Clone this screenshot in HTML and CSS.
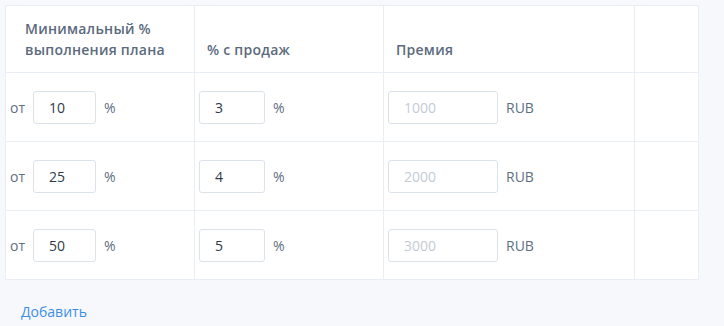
FILE: index.html
```html
<!DOCTYPE html>
<html lang="ru">
<head>
    <meta charset="UTF-8">
    <title>Премии</title>
    <link rel="stylesheet" href="styles.css">
</head>
<body>
    <div class="page">
        <table class="bonus-table">
            <colgroup>
                <col class="col-plan">
                <col class="col-sales">
                <col class="col-bonus">
                <col class="col-empty">
            </colgroup>
            <thead>
                <tr>
                    <th class="th-plan">Минимальный %<br>выполнения плана</th>
                    <th>% с продаж</th>
                    <th>Премия</th>
                    <th></th>
                </tr>
            </thead>
            <tbody>
                <tr>
                    <td><div class="field"><span class="unit">от</span><input class="inp inp-plan" type="text" value="10"><span class="unit">%</span></div></td>
                    <td><div class="field"><input class="inp inp-sales" type="text" value="3"><span class="unit">%</span></div></td>
                    <td><div class="field"><input class="inp inp-bonus" type="text" placeholder="1000"><span class="unit">RUB</span></div></td>
                    <td></td>
                </tr>
                <tr>
                    <td><div class="field"><span class="unit">от</span><input class="inp inp-plan" type="text" value="25"><span class="unit">%</span></div></td>
                    <td><div class="field"><input class="inp inp-sales" type="text" value="4"><span class="unit">%</span></div></td>
                    <td><div class="field"><input class="inp inp-bonus" type="text" placeholder="2000"><span class="unit">RUB</span></div></td>
                    <td></td>
                </tr>
                <tr>
                    <td><div class="field"><span class="unit">от</span><input class="inp inp-plan" type="text" value="50"><span class="unit">%</span></div></td>
                    <td><div class="field"><input class="inp inp-sales" type="text" value="5"><span class="unit">%</span></div></td>
                    <td><div class="field"><input class="inp inp-bonus" type="text" placeholder="3000"><span class="unit">RUB</span></div></td>
                    <td></td>
                </tr>
            </tbody>
        </table>
        <a class="add-link" href="#">Добавить</a>
    </div>
</body>
</html>
```

FILE: styles.css
```css
body {
    margin: 0;
    background-color: #f7f8fc;
    font-family: "Open Sans", "Noto Sans", sans-serif;
    font-size: 14px;
    color: #5f6f82;
}
.page {
    padding: 5px 0 0 5px;
}
.bonus-table {
    width: 693px;
    border-collapse: collapse;
    background-color: #ffffff;
    border: 1px solid #e9eef4;
    table-layout: fixed;
}
.col-plan {
    width: 189px;
}
.col-sales {
    width: 189px;
}
.col-bonus {
    width: 251px;
}
.col-empty {
    width: 64px;
}
.bonus-table th,
.bonus-table td {
    border: 1px solid #e9eef4;
}
.bonus-table th {
    height: 40px;
    padding: 12px;
    text-align: left;
    vertical-align: bottom;
    font-size: 14px;
    font-weight: 600;
    line-height: 21px;
    letter-spacing: 0.25px;
    color: #5b6a7d;
}
.bonus-table th.th-plan {
    padding-left: 19px;
}
.bonus-table td {
    height: 68px;
    padding: 0 4px;
    vertical-align: middle;
}
.field {
    display: flex;
    align-items: center;
    gap: 8px;
}
.unit {
    font-size: 14px;
}
.inp {
    box-sizing: border-box;
    height: 33px;
    padding: 0 0 0 15px;
    border: 1px solid #dbe2eb;
    border-radius: 3px;
    font-family: "Open Sans", "Noto Sans", sans-serif;
    font-size: 14px;
    color: #2f3a48;
    background-color: #ffffff;
    outline: none;
}
.inp::placeholder {
    color: #c3cbd6;
}
.inp-plan {
    width: 63px;
}
.inp-sales {
    width: 66px;
}
.inp-bonus {
    width: 110px;
}
.add-link {
    display: inline-block;
    margin: 22px 0 0 16px;
    font-size: 14px;
    color: #3b8ee8;
    text-decoration: none;
}
```
